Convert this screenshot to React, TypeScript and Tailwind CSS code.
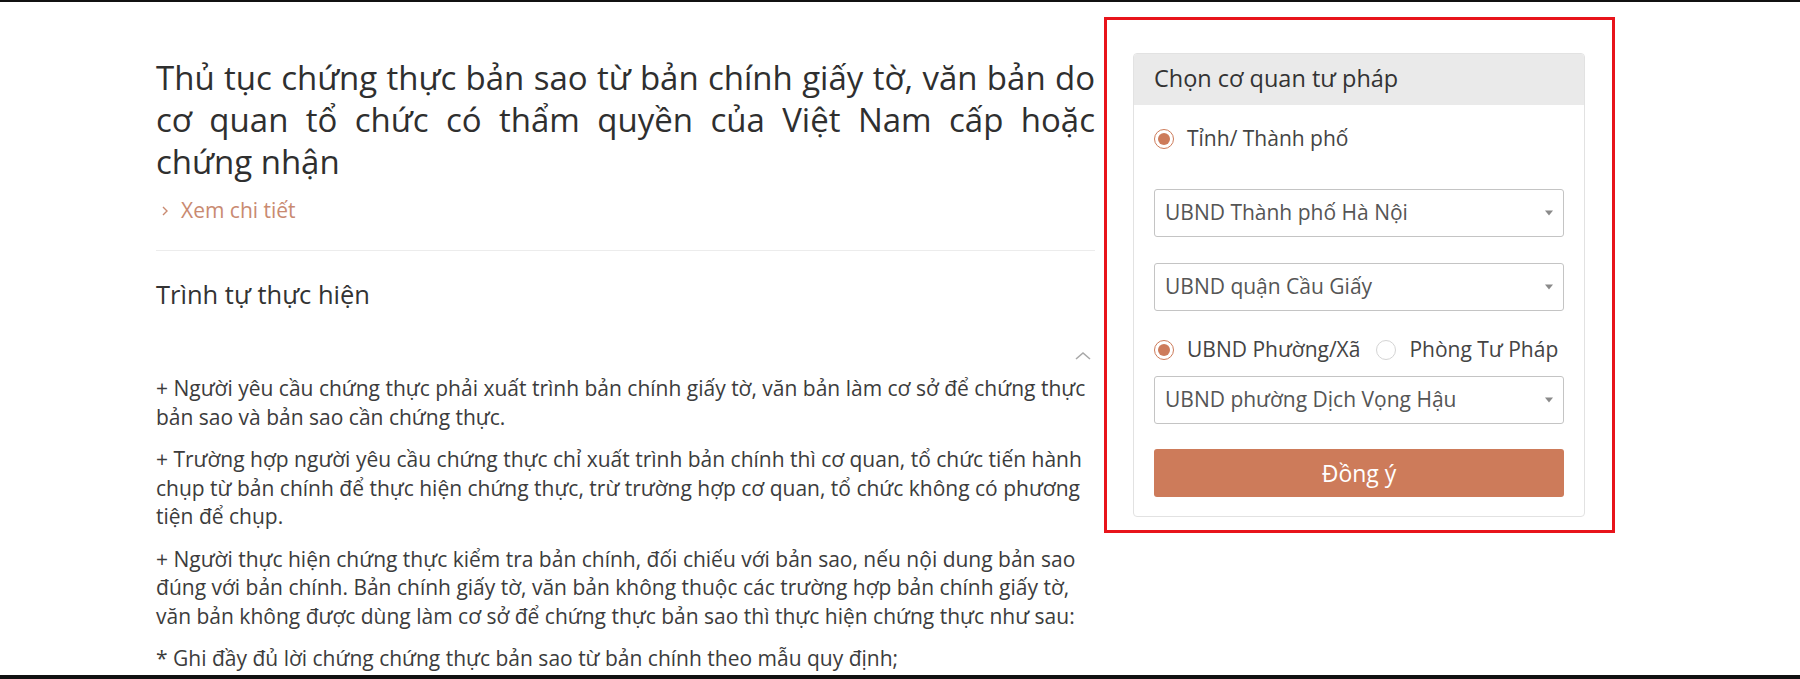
import React, { useState } from 'react';

const font = { fontFamily: '"Open Sans", "Noto Sans", sans-serif' };

const SelectBox = ({ value }: { value: string }) => (
  <div className="relative h-[48px] w-full rounded-[3px] border border-[#c4c4c4] bg-white flex items-center pl-[10px] pr-[30px]">
    <span className="text-[21px] text-[#555555] whitespace-nowrap">{value}</span>
    <span className="absolute right-[10px] top-1/2 -translate-y-1/2 w-0 h-0 border-l-[4px] border-r-[4px] border-t-[5px] border-l-transparent border-r-transparent border-t-[#8a8a8a]"></span>
  </div>
);

const Radio = ({ checked, label, onClick }: { checked: boolean; label: string; onClick: () => void }) => (
  <button type="button" onClick={onClick} className="flex items-center h-[28px] text-left">
    <span
      className={`w-[20px] h-[20px] rounded-full border flex items-center justify-center shrink-0 ${
        checked ? 'border-[#cd7b5a]' : 'border-[#d4d4d4]'
      }`}
    >
      {checked && <span className="w-[12px] h-[12px] rounded-full bg-[#cd7b5a]"></span>}
    </span>
    <span className="ml-[13px] text-[21px] text-[#444444] whitespace-nowrap">{label}</span>
  </button>
);

const App = () => {
  const [level, setLevel] = useState<'ward' | 'office'>('ward');

  return (
    <div
      className="w-[1800px] h-[679px] overflow-hidden bg-white border-t-2 border-b-4 border-[#111111] flex"
      style={font}
    >
      {/* Left: procedure content */}
      <div className="w-[939px] ml-[156px] pt-[55px] shrink-0">
        <h1 className="text-[33px] leading-[42px] text-[#2f2f2f] font-normal">
          <span className="block text-justify [text-align-last:justify]">
            Thủ tục chứng thực bản sao từ bản chính giấy tờ, văn bản do
          </span>
          <span className="block text-justify [text-align-last:justify]">
            cơ quan tổ chức có thẩm quyền của Việt Nam cấp hoặc
          </span>
          <span className="block">chứng nhận</span>
        </h1>

        <a href="#" className="mt-[14px] flex items-center h-[28px] text-[#c98a71]">
          <svg width="8" height="12" viewBox="0 0 8 12" className="ml-[5px]">
            <path d="M2 2l4 4-4 4" fill="none" stroke="#c98a71" strokeWidth="1.4" />
          </svg>
          <span className="ml-[12px] text-[21px]">Xem chi tiết</span>
        </a>

        <div className="mt-[25px] border-t border-[#ececec]"></div>

        <h2 className="mt-[27px] text-[25.5px] leading-[32px] text-[#333333]">Trình tự thực hiện</h2>

        <div className="mt-[40px] h-[20px] flex justify-end pr-[3px]">
          <svg width="18" height="12" viewBox="0 0 18 12">
            <path d="M2 9l7-6 7 6" fill="none" stroke="#a8a8a8" strokeWidth="1.6" />
          </svg>
        </div>

        <div className="mt-[4px] text-[21px] leading-[28.5px] text-[#3c3c3c] whitespace-nowrap">
          <p className="mb-[14px]">
            + Người yêu cầu chứng thực phải xuất trình bản chính giấy tờ, văn bản làm cơ sở để chứng thực
            <br />
            bản sao và bản sao cần chứng thực.
          </p>
          <p className="mb-[14px]">
            + Trường hợp người yêu cầu chứng thực chỉ xuất trình bản chính thì cơ quan, tổ chức tiến hành
            <br />
            chụp từ bản chính để thực hiện chứng thực, trừ trường hợp cơ quan, tổ chức không có phương
            <br />
            tiện để chụp.
          </p>
          <p className="mb-[14px]">
            + Người thực hiện chứng thực kiểm tra bản chính, đối chiếu với bản sao, nếu nội dung bản sao
            <br />
            đúng với bản chính. Bản chính giấy tờ, văn bản không thuộc các trường hợp bản chính giấy tờ,
            <br />
            văn bản không được dùng làm cơ sở để chứng thực bản sao thì thực hiện chứng thực như sau:
          </p>
          <p>* Ghi đầy đủ lời chứng chứng thực bản sao từ bản chính theo mẫu quy định;</p>
        </div>
      </div>

      {/* Right: agency picker, highlighted in red */}
      <div className="ml-[9px] mt-[15px] w-[511px] h-[516px] border-[3px] border-[#e8141b] pl-[26px] pt-[33px] shrink-0">
        <div className="w-[452px] rounded-[4px] border border-[#e2e2e2] overflow-hidden">
          <div className="h-[51px] bg-[#eaeaea] px-[20px] flex items-center">
            <span className="text-[23.5px] text-[#333333] -mt-[2px]">Chọn cơ quan tư pháp</span>
          </div>
          <div className="px-[20px] pt-[20px] pb-[19px] flex flex-col">
            <Radio checked label="Tỉnh/ Thành phố" onClick={() => {}} />
            <div className="mt-[36px]">
              <SelectBox value="UBND Thành phố Hà Nội" />
            </div>
            <div className="mt-[26px]">
              <SelectBox value="UBND quận Cầu Giấy" />
            </div>
            <div className="mt-[25px] flex items-center gap-[16px]">
              <Radio checked={level === 'ward'} label="UBND Phường/Xã" onClick={() => setLevel('ward')} />
              <Radio checked={level === 'office'} label="Phòng Tư Pháp" onClick={() => setLevel('office')} />
            </div>
            <div className="mt-[12px]">
              <SelectBox value="UBND phường Dịch Vọng Hậu" />
            </div>
            <button
              type="button"
              className="mt-[25px] h-[48px] w-full rounded-[3px] bg-[#cd7b5a] text-white text-[23px]"
            >
              Đồng ý
            </button>
          </div>
        </div>
      </div>
    </div>
  );
};

export default App;
